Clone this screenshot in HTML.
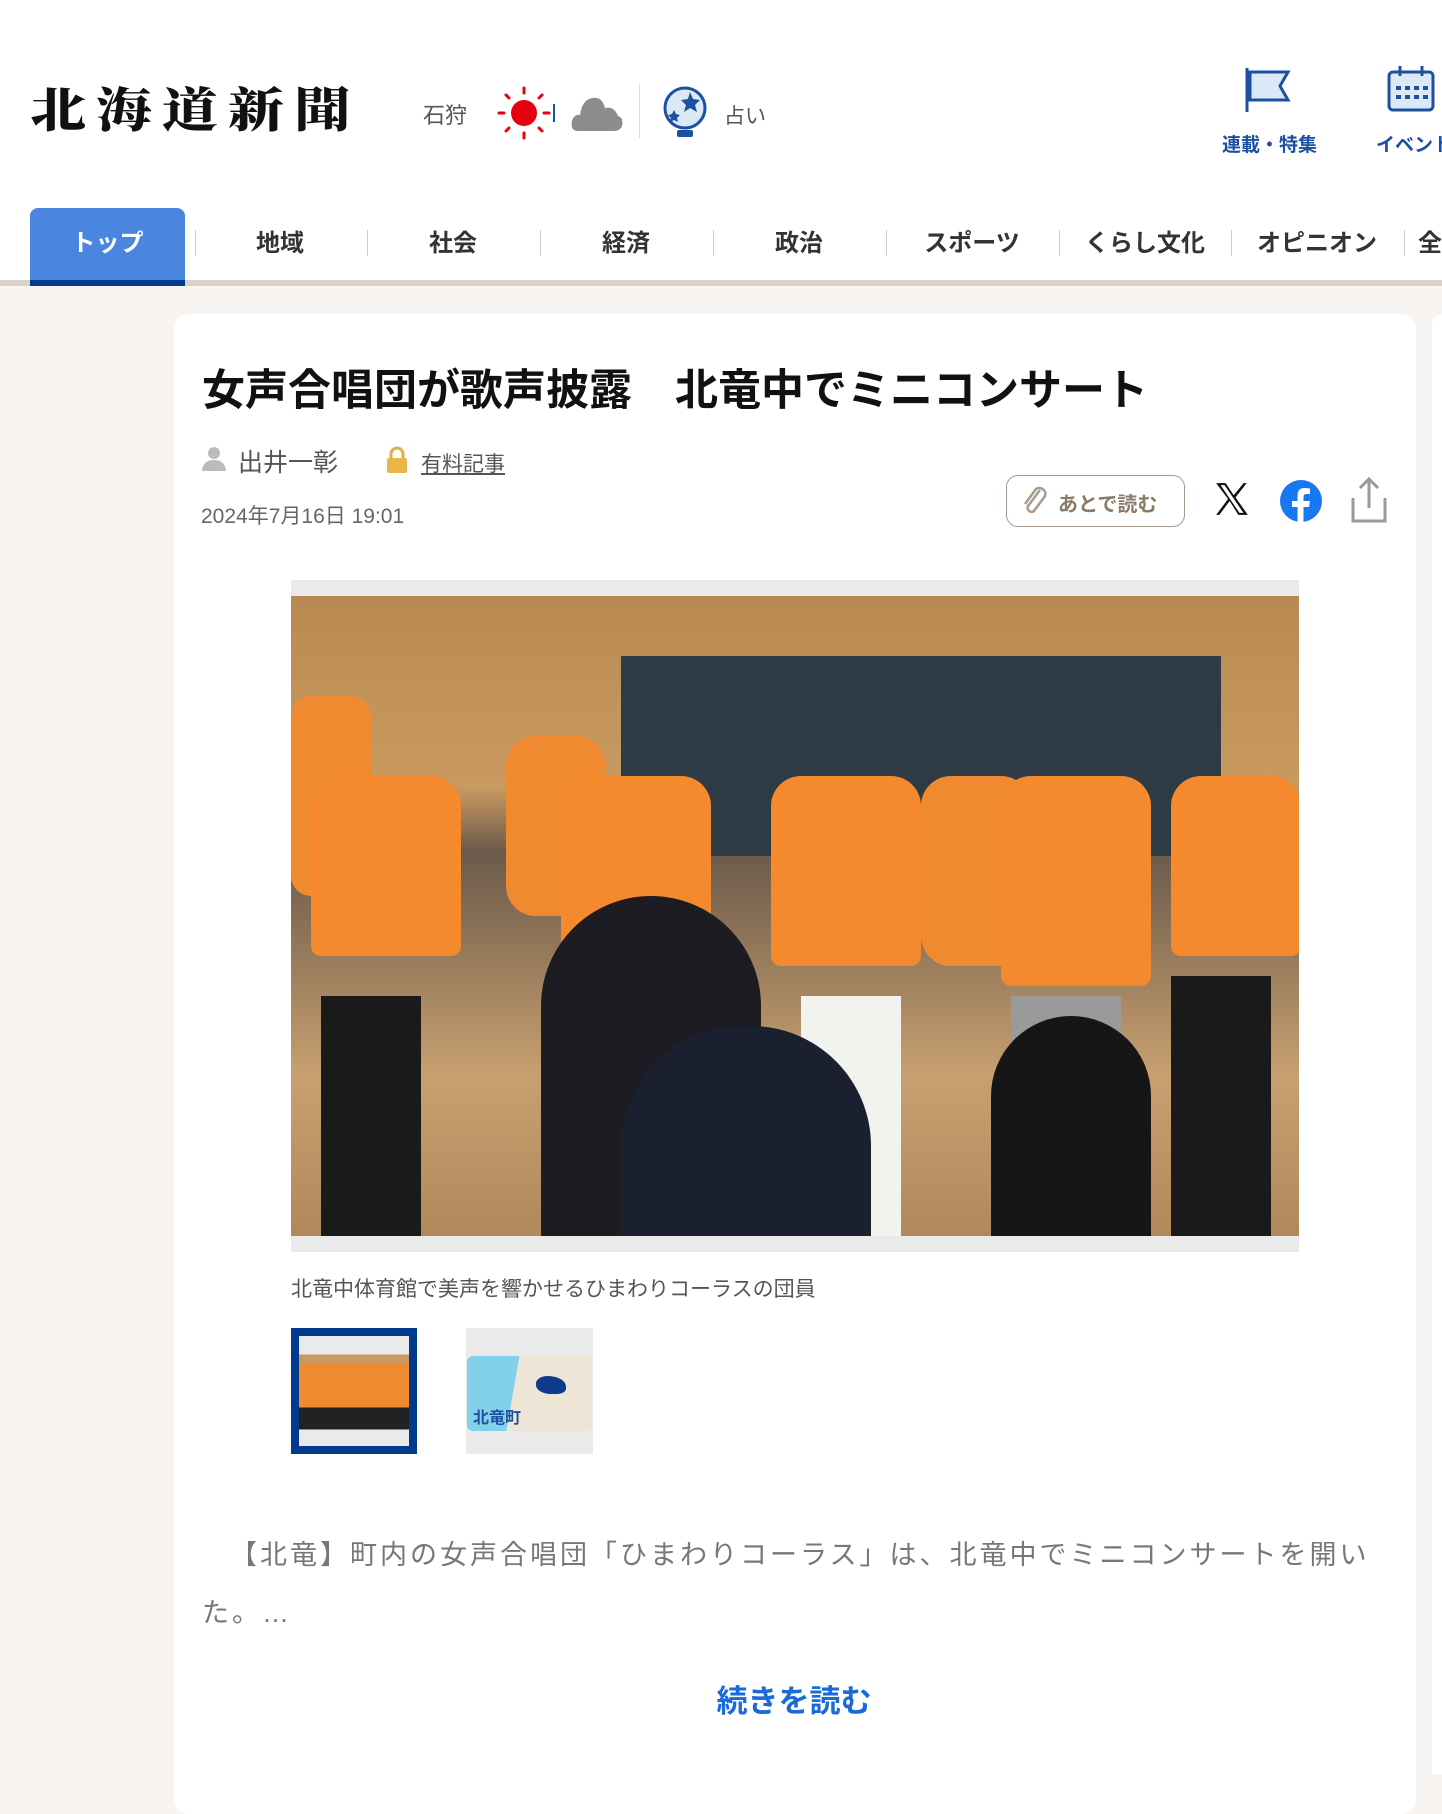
<!DOCTYPE html>
<html><head><meta charset="utf-8"><style>
*{margin:0;padding:0;box-sizing:border-box}
body{width:1442px;height:1770px;overflow:hidden;background:#f7f4f1;font-family:"Liberation Sans","Noto Sans CJK JP",sans-serif;position:relative}
.hdr{position:absolute;left:0;top:0;width:1442px;height:280px;background:#fff}
.abs{position:absolute}
.nav a{position:absolute;top:208px;height:72px;line-height:72px;text-align:center;font-size:24px;font-weight:bold;color:#333;text-decoration:none}
.sep{position:absolute;top:230px;width:1px;height:26px;background:#ccc}
.card{position:absolute;left:174px;top:314px;width:1242px;height:1500px;background:#fff;border-radius:14px}
</style></head><body>
<div class="hdr"></div>
<div class="abs" style="left:30px;top:80px;font-family:'Noto Serif CJK SC',serif;font-size:56px;line-height:64px;font-weight:900;letter-spacing:10px;color:#111;transform:scaleY(0.85);transform-origin:top left">北海道新聞</div>
<div class="abs" style="left:423px;top:98px;font-size:22px;color:#555">石狩</div>
<svg class="abs" style="left:496px;top:84px" width="60" height="58" viewBox="0 0 60 58"><circle cx="28" cy="29" r="13" fill="#e60012"/><g stroke="#e60012" stroke-width="3" stroke-linecap="round"><line x1="28" y1="4" x2="28" y2="9"/><line x1="28" y1="49" x2="28" y2="54"/><line x1="3" y1="29" x2="8" y2="29"/><line x1="48" y1="29" x2="53" y2="29"/><line x1="10" y1="11" x2="13" y2="14"/><line x1="43" y1="44" x2="46" y2="47"/><line x1="10" y1="47" x2="13" y2="44"/><line x1="43" y1="14" x2="46" y2="11"/></g><line x1="58" y1="20" x2="58" y2="38" stroke="#1e50a2" stroke-width="2"/></svg>
<svg class="abs" style="left:570px;top:88px" width="55" height="45" viewBox="0 0 55 45"><path d="M8 43 Q0 43 2 33 Q4 26 10 27 Q12 12 22 10 Q32 8 35 20 Q44 18 48 28 Q54 30 52 38 Q50 43 44 43Z" fill="#8c8c8c"/></svg>
<div class="abs" style="left:639px;top:84px;width:1px;height:54px;background:#ddd"></div>
<svg class="abs" style="left:660px;top:84px" width="50" height="56" viewBox="0 0 50 56"><circle cx="25" cy="24" r="20" fill="#dbe9f7" stroke="#1e50a2" stroke-width="3"/><path d="M30 8 l3 7 7 1-5 5 2 7-7-4-6 4 2-7-5-5 7-1z" fill="#1e50a2"/><path d="M14 26 l2 4 4 1-3 3 1 4-4-2-4 2 1-4-3-3 4-1z" fill="#1e50a2"/><rect x="17" y="46" width="16" height="7" rx="2" fill="#1e50a2"/></svg>
<div class="abs" style="left:724px;top:100px;font-size:21px;color:#555">占い</div>
<svg class="abs" style="left:1244px;top:66px" width="50" height="48" viewBox="0 0 50 48"><path d="M3 2 V46" stroke="#1e50a2" stroke-width="3"/><path d="M6 6 H44 L36 20 L44 34 H6Z" fill="#dbe9f7" stroke="#1e50a2" stroke-width="3"/></svg>
<div class="abs" style="left:1222px;top:130px;font-size:19px;color:#1e50a2;font-weight:bold">連載・特集</div>
<svg class="abs" style="left:1386px;top:64px" width="50" height="50" viewBox="0 0 50 50"><rect x="3" y="8" width="44" height="38" rx="4" fill="#dbe9f7" stroke="#1e50a2" stroke-width="3"/><line x1="14" y1="2" x2="14" y2="12" stroke="#1e50a2" stroke-width="3"/><line x1="36" y1="2" x2="36" y2="12" stroke="#1e50a2" stroke-width="3"/><g fill="#1e50a2"><rect x="10" y="22" width="5" height="4"/><rect x="19" y="22" width="5" height="4"/><rect x="28" y="22" width="5" height="4"/><rect x="37" y="22" width="5" height="4"/><rect x="10" y="31" width="5" height="4"/><rect x="19" y="31" width="5" height="4"/><rect x="28" y="31" width="5" height="4"/><rect x="37" y="31" width="5" height="4"/></g></svg>
<div class="abs" style="left:1376px;top:130px;font-size:19px;color:#1e50a2;font-weight:bold;white-space:nowrap">イベント</div>
<div class="abs" style="left:0;top:280px;width:1442px;height:6px;background:#d9d2c8"></div>
<div class="abs" style="left:30px;top:208px;width:155px;height:78px;background:#4a86e0;border-radius:8px 8px 0 0"></div>
<div class="abs" style="left:30px;top:280px;width:155px;height:6px;background:#003a8c"></div>
<div class="nav">
<a style="left:30px;width:155px;color:#fff">トップ</a>
<a style="left:195px;width:170px">地域</a>
<a style="left:368px;width:170px">社会</a>
<a style="left:541px;width:170px">経済</a>
<a style="left:714px;width:170px">政治</a>
<a style="left:887px;width:170px">スポーツ</a>
<a style="left:1060px;width:170px">くらし文化</a>
<a style="left:1232px;width:170px">オピニオン</a>
<a style="left:1418px;width:60px;text-align:left">全</a>
</div>
<div class="sep" style="left:195px"></div><div class="sep" style="left:367px"></div><div class="sep" style="left:540px"></div><div class="sep" style="left:713px"></div><div class="sep" style="left:886px"></div><div class="sep" style="left:1059px"></div><div class="sep" style="left:1231px"></div><div class="sep" style="left:1404px"></div>
<div class="card"></div>
<div class="abs" style="left:1432px;top:314px;width:10px;height:1460px;background:#fff;border-radius:10px 0 0 0"></div>
<div class="abs" style="left:202px;top:356px;font-size:43px;font-weight:bold;color:#111;white-space:nowrap">女声合唱団が歌声披露　北竜中でミニコンサート</div>
<svg class="abs" style="left:201px;top:445px" width="26" height="26" viewBox="0 0 26 26"><circle cx="13" cy="8" r="6" fill="#bbb"/><path d="M1 26 Q2 15 13 15 Q24 15 25 26Z" fill="#bbb"/></svg>
<div class="abs" style="left:238px;top:443px;font-size:25px;color:#555">出井一彰</div>
<svg class="abs" style="left:385px;top:446px" width="24" height="28" viewBox="0 0 24 28"><path d="M6 12 V8 a6 6 0 0 1 12 0 V12" stroke="#e0b040" stroke-width="3" fill="none"/><rect x="2" y="12" width="20" height="15" rx="2" fill="#e8b64a"/></svg>
<div class="abs" style="left:421px;top:448px;font-size:21px;color:#555;text-decoration:underline">有料記事</div>
<div class="abs" style="left:201px;top:500px;font-size:21px;color:#666">2024年7月16日 19:01</div>
<div class="abs" style="left:1006px;top:475px;width:179px;height:52px;border:1px solid #a89a8c;border-radius:12px"></div>
<svg class="abs" style="left:1020px;top:484px" width="30" height="34" viewBox="0 0 30 34"><path d="M20 6 L8 22 a4 4 0 0 0 6 5 L25 12 a6 6 0 0 0-9-7 L5 20" stroke="#a89a8c" stroke-width="2.5" fill="none"/></svg>
<div class="abs" style="left:1058px;top:488px;font-size:20px;font-weight:bold;color:#8a7a6a">あとで読む</div>
<svg class="abs" style="left:1213px;top:480px" width="38" height="38" viewBox="0 0 24 24"><path d="M2 2 L9.5 12 L2 22 H4 L10.5 13.3 L16 22 H22 L14.2 11 L21.3 2 H19.3 L13.1 9.6 L8 2Z M4.8 3.2 H7.3 L19.2 20.8 H16.7Z" fill="#111" fill-rule="evenodd"/></svg>
<svg class="abs" style="left:1279px;top:479px" width="44" height="44" viewBox="0 0 44 44"><circle cx="22" cy="22" r="21" fill="#1877f2"/><path d="M24.5 44 V28 H30 L31 22 H24.5 V18 Q24.5 15 27.5 15 H31 V9.5 Q28 9 25.5 9 Q18.5 9 18.5 16.5 V22 H13 V28 H18.5 V44Z" fill="#fff"/></svg>
<svg class="abs" style="left:1350px;top:476px" width="38" height="48" viewBox="0 0 38 48"><path d="M19 3 V32 M10 12 L19 3 L28 12" stroke="#999" stroke-width="3" fill="none"/><path d="M3 22 V45 H35 V22" stroke="#999" stroke-width="3" fill="none"/></svg>
<div class="abs" style="left:291px;top:580px;width:1008px;height:672px;background:#eaeaea"></div>
<div class="abs" style="left:291px;top:596px;width:1008px;height:640px;overflow:hidden;background:linear-gradient(180deg,#b88a52 0%,#c99a60 30%,#6b5a4a 40%,#c8a070 75%,#b0885a 100%)">
<div class="abs" style="left:330px;top:60px;width:600px;height:200px;background:#2e3a44"></div>
<div class="abs" style="left:0;top:100px;width:80px;height:200px;background:#f08a30;border-radius:20px"></div>
<div class="abs" style="left:20px;top:180px;width:150px;height:180px;background:#f5892e;border-radius:30px 30px 10px 10px"></div>
<div class="abs" style="left:215px;top:140px;width:100px;height:180px;background:#f08a30;border-radius:30px"></div>
<div class="abs" style="left:270px;top:180px;width:150px;height:200px;background:#f5892e;border-radius:30px 30px 10px 10px"></div>
<div class="abs" style="left:480px;top:180px;width:150px;height:190px;background:#f5892e;border-radius:30px 30px 10px 10px"></div>
<div class="abs" style="left:630px;top:180px;width:110px;height:190px;background:#f08a30;border-radius:30px"></div>
<div class="abs" style="left:710px;top:180px;width:150px;height:210px;background:#f5892e;border-radius:30px 30px 10px 10px"></div>
<div class="abs" style="left:880px;top:180px;width:130px;height:180px;background:#f5892e;border-radius:30px 30px 10px 10px"></div>
<div class="abs" style="left:30px;top:400px;width:100px;height:240px;background:#1a1a1a"></div>
<div class="abs" style="left:510px;top:400px;width:100px;height:240px;background:#f2f2ee"></div>
<div class="abs" style="left:720px;top:400px;width:110px;height:240px;background:#9a9a9a"></div>
<div class="abs" style="left:880px;top:380px;width:100px;height:260px;background:#1a1a1a"></div>
<div class="abs" style="left:250px;top:300px;width:220px;height:400px;background:#1c1c22;border-radius:110px 110px 0 0"></div>
<div class="abs" style="left:330px;top:430px;width:250px;height:300px;background:#1a2030;border-radius:120px 120px 0 0"></div>
<div class="abs" style="left:700px;top:420px;width:160px;height:260px;background:#161616;border-radius:80px 80px 0 0"></div>
</div>
<div class="abs" style="left:291px;top:1273px;font-size:21px;color:#555">北竜中体育館で美声を響かせるひまわりコーラスの団員</div>
<div class="abs" style="left:291px;top:1328px;width:126px;height:126px;background:#003a8c;padding:8px"><div style="width:100%;height:100%;background:linear-gradient(180deg,#eaeaea 0 17%,#c89a60 17% 25%,#f08a30 25% 65%,#222 65% 85%,#eaeaea 85%)"></div></div>
<div class="abs" style="left:466px;top:1328px;width:127px;height:126px;background:#eaeaea"><div style="position:absolute;left:1px;top:28px;width:125px;height:75px;background:linear-gradient(100deg,#82d0ea 38%,#ede5d6 38%);border-radius:6px"></div><div style="position:absolute;left:70px;top:48px;width:30px;height:18px;background:#0d3a8a;border-radius:40% 60% 30% 50%"></div><div style="position:absolute;left:7px;top:76px;font-size:16px;color:#1e50a2;font-weight:bold">北竜町</div></div>
<div class="abs" style="left:202px;top:1526px;width:1170px;font-size:27px;letter-spacing:3px;color:#777;line-height:58px;text-indent:28px">【北竜】町内の女声合唱団「ひまわりコーラス」は、北竜中でミニコンサートを開い<br>た。…</div>
<div class="abs" style="left:600px;top:1676px;width:388px;text-align:center;font-size:31px;font-weight:bold;color:#1a6ad8">続きを読む</div>
</body></html>
